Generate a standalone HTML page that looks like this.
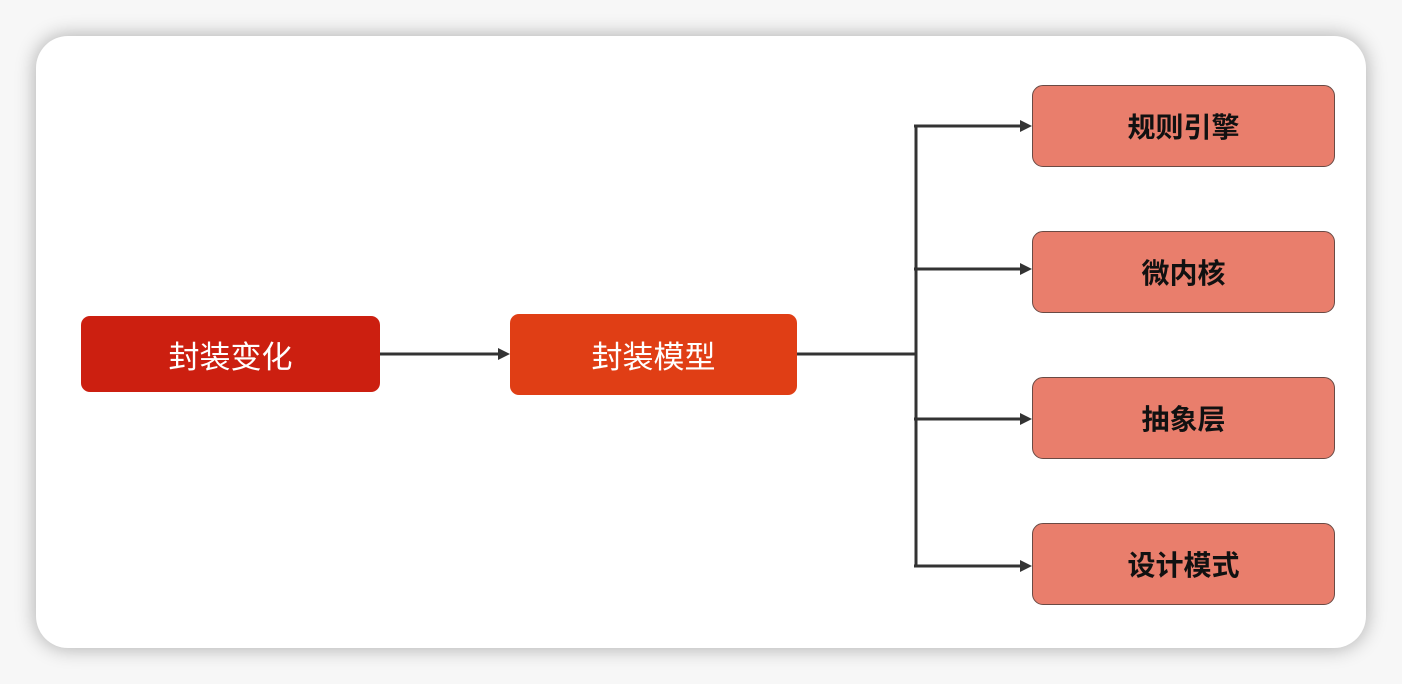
<!DOCTYPE html>
<html><head><meta charset="utf-8"><style>
html,body{margin:0;padding:0;}
body{width:1402px;height:684px;background:#f7f7f7;position:relative;overflow:hidden;font-family:"Liberation Sans","Noto Sans CJK SC",sans-serif;}
.card{position:absolute;left:36px;top:36px;width:1330px;height:612px;background:#fff;border-radius:32px;box-shadow:0 0 20px rgba(0,0,0,0.32);}
.b{position:absolute;display:flex;align-items:center;justify-content:center;box-sizing:border-box;}
.l{color:#fff;font-size:31px;border-radius:9px;}
.r{left:1032px;width:303px;height:82px;background:#e97e6c;border:1.5px solid #6a4a44;border-radius:11px;color:#111;font-size:28px;font-weight:bold;}
svg{position:absolute;left:0;top:0;}
</style></head><body>
<div class="card"></div>
<svg width="1402" height="684">
<g stroke="#333" stroke-width="3" fill="none">
<line x1="380" y1="354" x2="500" y2="354"/>
<line x1="797" y1="354" x2="916" y2="354"/>
<line x1="916" y1="125" x2="916" y2="567"/>
<line x1="914" y1="126" x2="1022" y2="126"/>
<line x1="914" y1="269" x2="1022" y2="269"/>
<line x1="914" y1="419" x2="1022" y2="419"/>
<line x1="914" y1="566" x2="1022" y2="566"/>
</g>
<g fill="#333">
<polygon points="510,354 498,348 498,360"/>
<polygon points="1032,126 1020,120 1020,132"/>
<polygon points="1032,269 1020,263 1020,275"/>
<polygon points="1032,419 1020,413 1020,425"/>
<polygon points="1032,566 1020,560 1020,572"/>
</g>
</svg>
<div class="b l" style="left:81px;top:316px;width:299px;height:76px;background:#cc1f10;">封装变化</div>
<div class="b l" style="left:510px;top:314px;width:287px;height:81px;background:#e03e15;">封装模型</div>
<div class="b r" style="top:85px;">规则引擎</div>
<div class="b r" style="top:231px;">微内核</div>
<div class="b r" style="top:377px;">抽象层</div>
<div class="b r" style="top:523px;">设计模式</div>
</body></html>
